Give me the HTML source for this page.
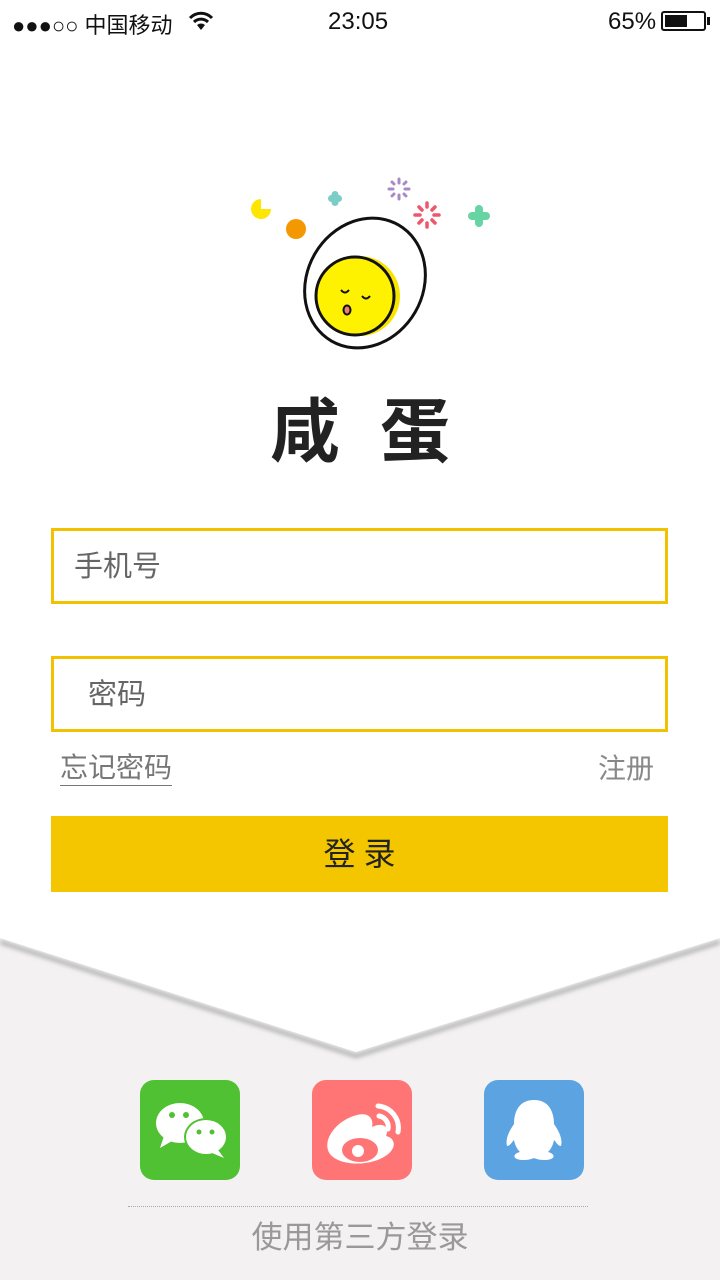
<!DOCTYPE html>
<html><head><meta charset="utf-8"><style>
*{margin:0;padding:0;box-sizing:border-box}
body{width:720px;height:1280px;position:relative;overflow:hidden;background:#f3f1f2;font-family:"Liberation Sans","Noto Sans CJK SC",sans-serif}
.abs{position:absolute}
.inp{position:absolute;left:51px;width:617px;height:76px;border:3px solid #f2c200;background:#fff;font-size:29px;color:#666;line-height:72px}
</style></head><body>
<svg class="abs" style="left:0;top:0" width="720" height="1280">
<defs><filter id="sh" x="-10%" y="-10%" width="120%" height="130%"><feGaussianBlur stdDeviation="2.5"/></filter></defs>
<polygon points="0,940 356,1054 720,940 720,944 356,1058 0,944" fill="#aaa" filter="url(#sh)"/>
<polygon points="0,0 720,0 720,938 356,1052 0,938" fill="#fff"/>
</svg>
<div class="abs" style="left:12px;top:8px;font-size:22px;color:#111">●●●○○ 中国移动</div>
<svg class="abs" style="left:188px;top:11px" width="26" height="20"><path d="M2,7 a15,15 0 0 1 22,0 M6,11 a10,10 0 0 1 14,0" fill="none" stroke="#111" stroke-width="3"/><path d="M9,14 a6,6 0 0 1 8,0 L13,19Z" fill="#111"/></svg>
<div class="abs" style="left:328px;top:8px;font-size:24px;color:#111">23:05</div>
<div class="abs" style="left:608px;top:8px;font-size:24px;color:#111">65%</div>
<div class="abs" style="left:661px;top:11px;width:45px;height:20px;border:2px solid #111;border-radius:3px"><div style="margin:2px;width:22px;height:12px;background:#111"></div></div>
<div class="abs" style="left:707px;top:17px;width:3px;height:8px;background:#111"></div>
<svg class="abs" style="left:240px;top:170px" width="260" height="190">
<path d="M22,34 A10,10 0 1 0 32,44 L22,44 Z" fill="#ffe600" transform="translate(-1,-5)"/>
<circle cx="56" cy="59" r="10" fill="#f39800"/>
<g fill="#7ccdc8"><rect x="88" y="25" width="14" height="7" rx="3.5"/><rect x="91.5" y="21" width="7" height="15" rx="3.5"/></g>
<g fill="#67d4a3"><rect x="228" y="42" width="22" height="8" rx="4"/><rect x="235" y="35" width="8" height="22" rx="4"/></g>
<g stroke="#a98ac7" stroke-width="3" stroke-linecap="round"><path d="M159,9v4M159,25v4M149,19h4M165,19h4M152,12l2,2M164,24l2,2M166,12l-2,2M152,26l2,-2"/></g>
<g stroke="#f0556a" stroke-width="3.5" stroke-linecap="round"><path d="M187,33v4M187,53v4M175,45h5M194,45h5M179,37l3,3M192,50l3,3M195,37l-3,3M179,53l3,-3"/></g>
<ellipse cx="125" cy="113" rx="58" ry="67" transform="rotate(30 125 113)" fill="#fff" stroke="#111" stroke-width="3"/>
<circle cx="120" cy="126" r="40" fill="#f9e400"/>
<circle cx="115" cy="126" r="39" fill="#fff200" stroke="#111" stroke-width="3"/>
<path d="M101,120 q4,5 8,0 M122,126 q4,5 8,0" fill="none" stroke="#111" stroke-width="2"/>
<ellipse cx="107" cy="140" rx="3.5" ry="4.5" fill="#f08070" stroke="#111" stroke-width="2"/>
</svg>
<div class="abs" style="left:0;width:720px;top:376px;text-align:center;font-size:70px;font-weight:bold;color:#222;letter-spacing:40px;padding-left:40px">咸蛋</div>
<div class="inp" style="top:528px;padding-left:20px">手机号</div>
<div class="inp" style="top:656px;padding-left:34px">密码</div>
<div class="abs" style="left:60px;top:751px;font-size:28px;color:#777;border-bottom:1px solid #777;line-height:34px">忘记密码</div>
<div class="abs" style="left:598px;top:751px;font-size:28px;color:#888;line-height:36px">注册</div>
<div class="abs" style="left:51px;top:816px;width:617px;height:76px;background:#f3c600;text-align:center;line-height:76px;font-size:32px;letter-spacing:8px;padding-left:8px;color:#222">登录</div>
<div class="abs" style="left:140px;top:1080px;width:100px;height:100px;border-radius:14px;background:#50c132">
<svg width="100" height="100"><ellipse cx="40" cy="43" rx="24" ry="20" fill="#fff"/><path d="M24,56 l-4,12 l12,-7z" fill="#fff"/><ellipse cx="66" cy="57" rx="22" ry="19" fill="#50c132"/><ellipse cx="66" cy="57" rx="20" ry="17" fill="#fff"/><path d="M78,70 l6,8 l-12,-5z" fill="#fff"/><g fill="#50c132"><circle cx="32" cy="35" r="3"/><circle cx="46" cy="35" r="3"/><circle cx="59" cy="52" r="2.5"/><circle cx="72" cy="52" r="2.5"/></g></svg></div>
<div class="abs" style="left:312px;top:1080px;width:100px;height:100px;border-radius:14px;background:#ff7575">
<svg width="100" height="100"><path d="M45,35 C25,40 12,58 16,70 C20,84 50,88 70,78 C86,70 84,58 74,56 C78,46 70,42 60,47 C62,38 56,32 45,35Z" fill="#fff"/><ellipse cx="48" cy="70" rx="18" ry="12" fill="#ff7575"/><circle cx="46" cy="71" r="6" fill="#fff"/><path d="M66,26 a22,22 0 0 1 20,26 M67,36 a11,11 0 0 1 9,13" fill="none" stroke="#fff" stroke-width="5" stroke-linecap="round"/></svg></div>
<div class="abs" style="left:484px;top:1080px;width:100px;height:100px;border-radius:14px;background:#5ca3e2">
<svg width="100" height="100"><path d="M50,20 C35,20 30,32 30,44 C26,50 21,58 23,66 C26,66 28,62 30,60 C31,66 34,70 36,72 C28,74 28,80 40,80 C46,80 50,78 50,78 C50,78 54,80 60,80 C72,80 72,74 64,72 C66,70 69,66 70,60 C72,62 74,66 77,66 C79,58 74,50 70,44 C70,32 65,20 50,20Z" fill="#fff"/></svg></div>
<div class="abs" style="left:128px;top:1206px;width:460px;border-top:1px dotted #aaa"></div>
<div class="abs" style="left:0;width:720px;top:1212px;text-align:center;font-size:31px;color:#999">使用第三方登录</div>
</body></html>
